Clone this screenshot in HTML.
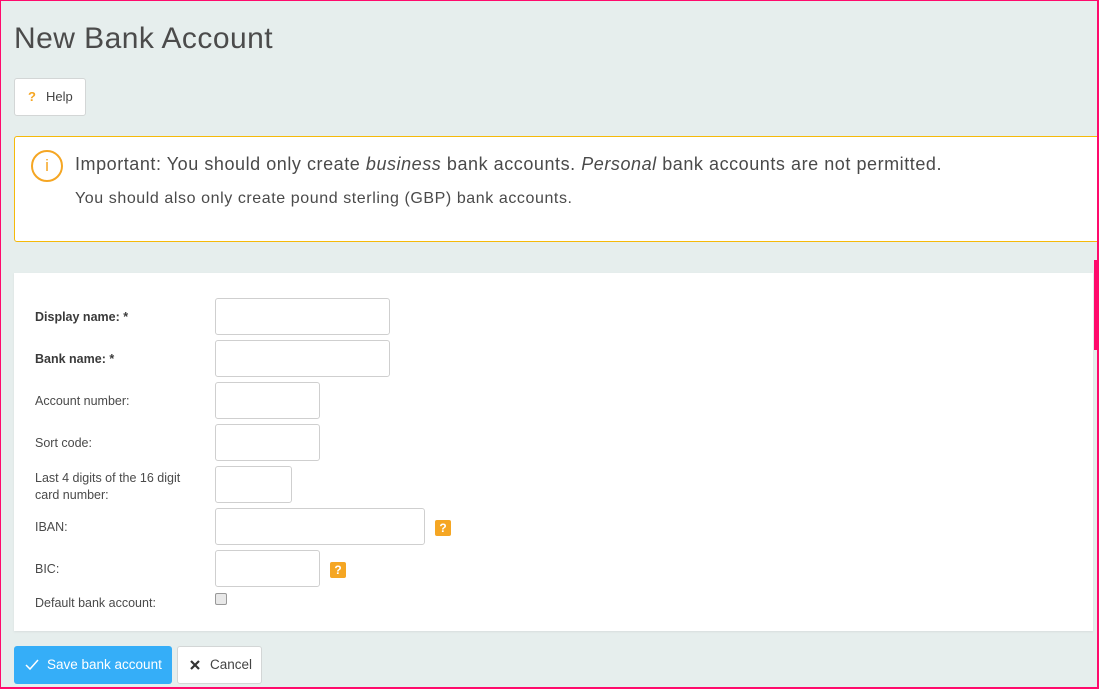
<!DOCTYPE html>
<html><head><meta charset="utf-8"><style>
*{box-sizing:border-box;margin:0;padding:0}
body{width:1099px;height:689px;overflow:hidden;background:#e6eeed;font-family:"Liberation Sans",sans-serif;color:#4a4a4a;position:relative}
.frame{position:absolute;left:0;top:0;width:1099px;height:689px;border:1px solid #ff0a6c;border-right-width:2px;border-bottom-width:2px;pointer-events:none;z-index:10}
.thumb{position:absolute;left:1094px;top:260px;width:4px;height:90px;background:#ff0a6c;z-index:11}
h1{position:absolute;left:14px;top:22px;font-size:30px;font-weight:normal;color:#4b4b4b;letter-spacing:0.45px}
.help{position:absolute;left:14px;top:78px;width:72px;height:38px;background:#fff;border:1px solid #d3d6d6;border-radius:3px;font-size:13px;line-height:36px;padding-left:13px;color:#444}
.help b{color:#f5a623;margin-right:10px}
.alert{position:absolute;left:14px;top:136px;width:1090px;height:106px;background:#fff;border:1px solid #f5b90a;border-radius:3px}
.alert .ic{position:absolute;left:16px;top:13px;width:32px;height:32px;border:2px solid #f5a623;border-radius:50%;color:#f5a623;text-align:center;font-size:17px;line-height:28px}
.alert .l1{position:absolute;left:60px;top:17px;font-size:18px;letter-spacing:0.55px;color:#4a4a4a;white-space:nowrap}
.alert .l2{position:absolute;left:60px;top:53px;font-size:16px;letter-spacing:0.58px;color:#4a4a4a;white-space:nowrap}
.panel{position:absolute;left:14px;top:273px;width:1079px;height:358px;background:#fff;box-shadow:0 1px 2px #d8dede}
.lab{position:absolute;left:35px;font-size:12.5px;color:#4a4a4a}
.lab.b{font-weight:bold;color:#3a3a3a}
.in{position:absolute;left:215px;height:37px;border:1px solid #cfcfcf;border-radius:3px;background:#fff}
.q{position:absolute;width:16px;height:16px;background:#f5a623;border-radius:2px;color:#fff;font-weight:bold;font-size:12px;text-align:center;line-height:16px}
.cb{position:absolute;left:215px;top:593px;width:12px;height:12px;border:1px solid #999;border-radius:2px;background:#e8e8e8}
.save{position:absolute;left:14px;top:646px;width:158px;height:38px;background:#35aef8;border-radius:3px;color:#fff;font-size:13.5px;line-height:38px;padding-left:33px}
.cancel{position:absolute;left:177px;top:646px;width:85px;height:38px;background:#fff;border:1px solid #d3d6d6;border-radius:3px;font-size:13.5px;line-height:36px;padding-left:32px;color:#444}
</style></head><body>
<div class="frame"></div><div class="thumb"></div>
<h1>New Bank Account</h1>
<div class="help"><b>?</b>Help</div>
<div class="alert"><div class="ic">i</div>
<div class="l1">Important: You should only create <i>business</i> bank accounts. <i>Personal</i> bank accounts are not permitted.</div>
<div class="l2">You should also only create pound sterling (GBP) bank accounts.</div></div>
<div class="panel"></div>
<div class="lab b" style="top:310px">Display name: *</div>
<div class="lab b" style="top:352px">Bank name: *</div>
<div class="lab" style="top:394px">Account number:</div>
<div class="lab" style="top:436px">Sort code:</div>
<div class="lab" style="top:470px;line-height:17px">Last 4 digits of the 16 digit<br>card number:</div>
<div class="lab" style="top:520px">IBAN:</div>
<div class="lab" style="top:562px">BIC:</div>
<div class="lab" style="top:596px">Default bank account:</div>
<div class="in" style="top:298px;width:175px"></div>
<div class="in" style="top:340px;width:175px"></div>
<div class="in" style="top:382px;width:105px"></div>
<div class="in" style="top:424px;width:105px"></div>
<div class="in" style="top:466px;width:77px"></div>
<div class="in" style="top:508px;width:210px"></div>
<div class="in" style="top:550px;width:105px"></div>
<div class="q" style="left:435px;top:520px">?</div>
<div class="q" style="left:330px;top:562px">?</div>
<div class="cb"></div>
<div class="save"><svg style="position:absolute;left:11px;top:13px" width="14" height="12" viewBox="0 0 14 12"><path d="M1 6l4 4 8-9" fill="none" stroke="#fff" stroke-width="1.5"/></svg>Save bank account</div>
<div class="cancel"><svg style="position:absolute;left:12px;top:13px" width="10" height="10" viewBox="0 0 10 10"><path d="M1 1l8 8M9 1l-8 8" stroke="#333" stroke-width="2.2"/></svg>Cancel</div>
</body></html>
